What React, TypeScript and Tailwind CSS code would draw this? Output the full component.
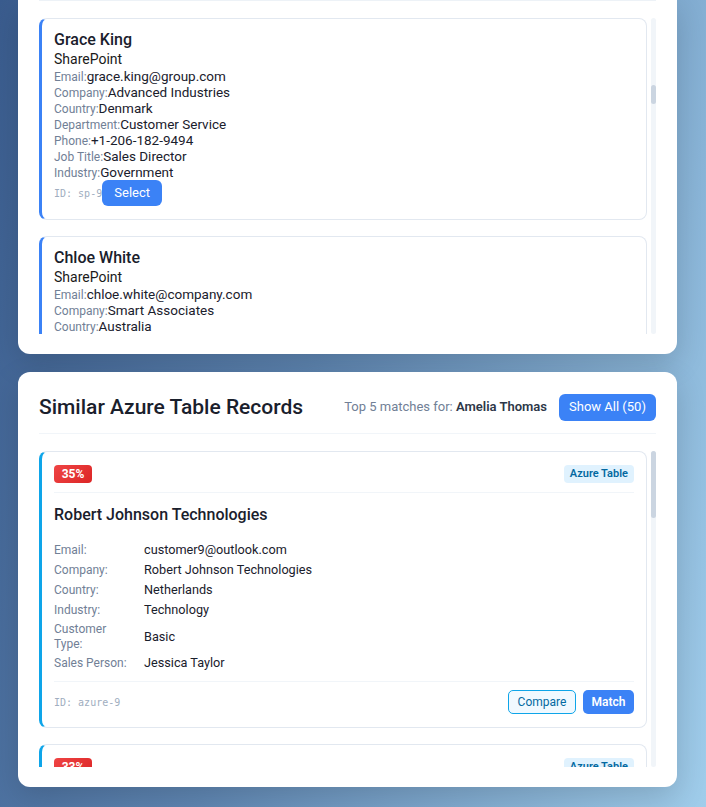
import React from "react";

type Field = { label: string; value: string };

const spCards: { name: string; fields: Field[]; id: string }[] = [
  {
    name: "Grace King",
    id: "sp-9",
    fields: [
      { label: "Email:", value: "grace.king@group.com" },
      { label: "Company:", value: "Advanced Industries" },
      { label: "Country:", value: "Denmark" },
      { label: "Department:", value: "Customer Service" },
      { label: "Phone:", value: "+1-206-182-9494" },
      { label: "Job Title:", value: "Sales Director" },
      { label: "Industry:", value: "Government" },
    ],
  },
  {
    name: "Chloe White",
    id: "sp-10",
    fields: [
      { label: "Email:", value: "chloe.white@company.com" },
      { label: "Company:", value: "Smart Associates" },
      { label: "Country:", value: "Australia" },
      { label: "Department:", value: "Marketing" },
      { label: "Phone:", value: "+1-415-555-0132" },
      { label: "Job Title:", value: "Account Manager" },
      { label: "Industry:", value: "Retail" },
    ],
  },
];

function SpCard({ name, fields, id }: { name: string; fields: Field[]; id: string }) {
  return (
    <div className="shrink-0 rounded-lg border border-[#e2e8f0] border-l-[3px] border-l-[#3b82f6] bg-white pl-3 pr-3 pt-[11px] pb-[13px]">
      <div className="text-[16px] leading-[20px] font-medium text-[#1a202c]">{name}</div>
      <div className="text-[14px] leading-[18px] text-[#1a1a1a]">SharePoint</div>
      <div className="flex flex-col">
        {fields.map((f) => (
          <div key={f.label} className="flex h-[16px] items-baseline leading-[16px]">
            <span className="text-[12px] leading-[16px] text-[#718096]">{f.label}</span>
            <span className="text-[13.5px] leading-[16px] text-[#1a202c]">{f.value}</span>
          </div>
        ))}
      </div>
      <div className="flex items-center">
        <span className="font-['DejaVu_Sans_Mono',monospace] text-[10px] text-[#a0aec0]">ID: {id}</span>
        <button className="h-[26px] w-[60px] rounded-md bg-[#3b82f6] text-[13px] text-white">
          Select
        </button>
      </div>
    </div>
  );
}

const azFields: Field[] = [
  { label: "Email:", value: "customer9@outlook.com" },
  { label: "Company:", value: "Robert Johnson Technologies" },
  { label: "Country:", value: "Netherlands" },
  { label: "Industry:", value: "Technology" },
  { label: "Customer Type:", value: "Basic" },
  { label: "Sales Person:", value: "Jessica Taylor" },
];

function AzureCard({ pct, title, id, fields }: { pct: string; title: string; id: string; fields: Field[] }) {
  return (
    <div className="shrink-0 rounded-lg border border-[#e2e8f0] border-l-[3px] border-l-[#0ea5e9] bg-white px-3 pt-[13px] pb-[13px]">
      <div className="flex items-center justify-between border-b border-[#f1f5f9] pb-[9px]">
        <span className="flex h-[18px] w-[38px] items-center justify-center rounded-[4px] bg-[linear-gradient(135deg,#ef4444,#dc2626)] text-[12px] font-bold text-white">
          {pct}
        </span>
        <span className="flex h-[18px] items-center rounded-[4px] bg-[#e0f2fe] px-[6px] text-[11px] font-semibold text-[#0369a1]">
          Azure Table
        </span>
      </div>
      <div className="mt-[12px] text-[16px] leading-[20px] font-medium text-[#1a202c]">{title}</div>
      <div className="mt-[15px] flex flex-col">
        {fields.map((f) => (
          <div key={f.label} className="flex items-center gap-[12px] py-[2px]">
            <span className="w-[78px] shrink-0 text-[12px] leading-[14.5px] text-[#718096]">{f.label}</span>
            <span className="text-[12.7px] leading-[16px] text-[#1a202c]">{f.value}</span>
          </div>
        ))}
      </div>
      <div className="mt-[8px] flex items-center justify-between border-t border-[#f1f5f9] pt-[8px]">
        <span className="font-['DejaVu_Sans_Mono',monospace] text-[10px] text-[#a0aec0]">ID: {id}</span>
        <div className="flex gap-[7px]">
          <button className="h-[24px] w-[68px] rounded-[5px] border border-[#0ea5e9] bg-[#f0f9ff] text-[12px] text-[#0369a1]">
            Compare
          </button>
          <button className="h-[24px] w-[51px] rounded-[5px] bg-[#3b82f6] text-[12px] font-semibold text-white">
            Match
          </button>
        </div>
      </div>
    </div>
  );
}

function ScrollTrack({ offset, thumb }: { offset: string; thumb: string }) {
  return (
    <div className="w-[5px] shrink-0 rounded-full bg-[#f1f5f9]">
      <div className={`${offset} ${thumb} w-full rounded-full bg-[#cbd5e1]`} />
    </div>
  );
}

export default function App() {
  return (
    <div className="h-[807px] overflow-hidden bg-[linear-gradient(105deg,#3a5c8e_0%,#5f86b2_45%,#a0cdeb_100%)] pl-[18px] pr-[29px] font-['Roboto',sans-serif]">
      {/* top panel (scrolled, top cut off) */}
      <div className="rounded-b-xl bg-white px-[21px] pb-[20px] shadow-[0_10px_30px_rgba(0,0,0,0.15)]">
        <div className="border-t border-[#edf2f7]" />
        <div className="mt-[17px] flex h-[316px] gap-[4px]">
          <div className="flex min-w-0 flex-1 flex-col gap-4 overflow-hidden">
            {spCards.map((c) => (
              <SpCard key={c.name} {...c} />
            ))}
          </div>
          <ScrollTrack offset="mt-[67px]" thumb="h-[19px]" />
        </div>
      </div>

      {/* second panel */}
      <div className="mt-[18px] rounded-xl bg-white px-[21px] pt-[21px] pb-[20px] shadow-[0_10px_30px_rgba(0,0,0,0.15)]">
        <div className="flex items-center justify-between border-b border-[#f1f5f9] pb-[12px]">
          <h2 className="text-[21px] leading-[28px] font-medium text-[#1a202c]">Similar Azure Table Records</h2>
          <div className="flex items-center gap-[12px]">
            <span className="text-[13px] text-[#718096]">
              Top 5 matches for: <span className="font-semibold text-[#2d3748]">Amelia Thomas</span>
            </span>
            <button className="h-[27px] w-[97px] rounded-md bg-[#3b82f6] text-[13px] text-white">
              Show All (50)
            </button>
          </div>
        </div>
        <div className="mt-[17px] flex h-[316px] gap-[4px]">
          <div className="flex min-w-0 flex-1 flex-col gap-4 overflow-hidden">
            <AzureCard pct="35%" title="Robert Johnson Technologies" id="azure-9" fields={azFields} />
            <AzureCard pct="33%" title="Sarah Miller Solutions" id="azure-14" fields={azFields} />
          </div>
          <ScrollTrack offset="mt-0" thumb="h-[67px]" />
        </div>
      </div>
    </div>
  );
}
